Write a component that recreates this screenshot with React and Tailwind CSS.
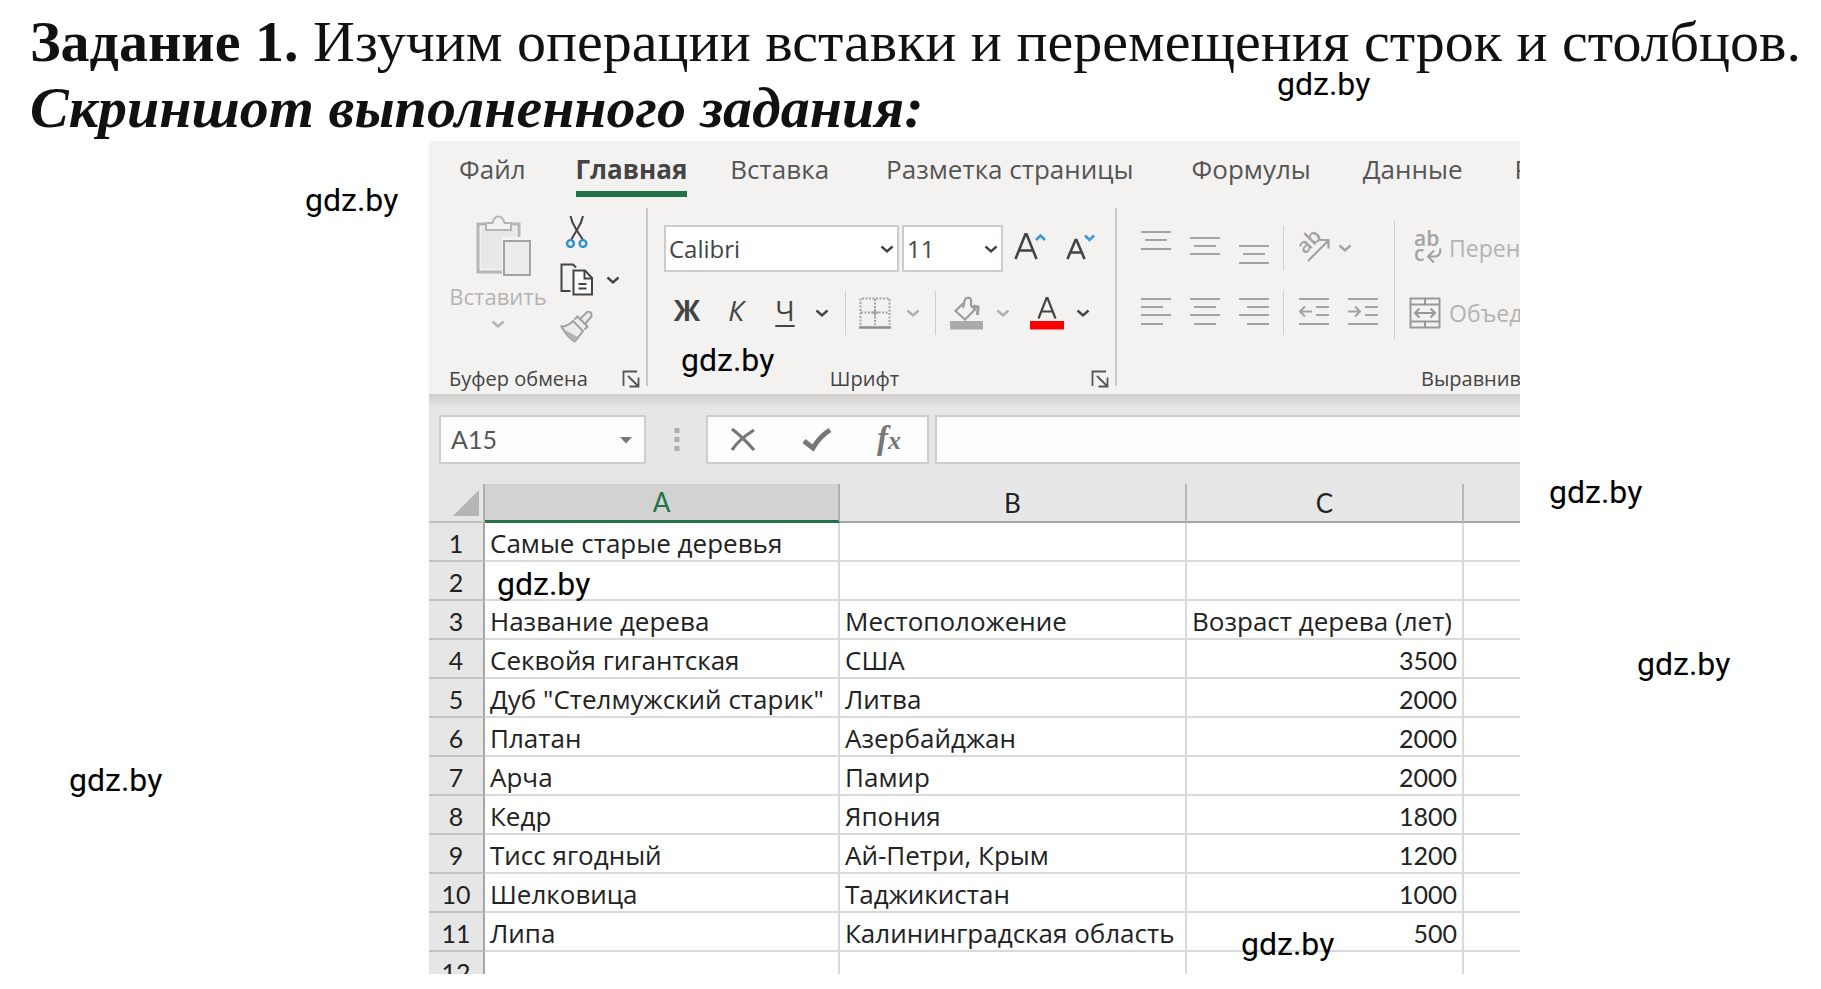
import React from "react";

const tabs = [
  { name: "Файл", box: "ml-[30px]" },
  { name: "Главная", box: "ml-[50px]", active: true },
  { name: "Вставка", box: "ml-[43px]" },
  { name: "Разметка страницы", box: "ml-[57px]" },
  { name: "Формулы", box: "ml-[58px]" },
  { name: "Данные", box: "ml-[52px]" },
  { name: "Рецензирование", box: "ml-[52px]" },
];

const rows = [
  ["Самые старые деревья", "", ""],
  ["", "", ""],
  ["Название дерева", "Местоположение", "Возраст дерева (лет)"],
  ["Секвойя гигантская", "США", 3500],
  ['Дуб "Стелмужский старик"', "Литва", 2000],
  ["Платан", "Азербайджан", 2000],
  ["Арча", "Памир", 2000],
  ["Кедр", "Япония", 1800],
  ["Тисс ягодный", "Ай-Петри, Крым", 1200],
  ["Шелковица", "Таджикистан", 1000],
  ["Липа", "Калининградская область", 500],
];

const marks = [
  "left-[1277px] top-[64px]",
  "left-[305px] top-[180px]",
  "left-[681px] top-[340px]",
  "left-[1549px] top-[472px]",
  "left-[497px] top-[564px]",
  "left-[1637px] top-[644px]",
  "left-[69px] top-[760px]",
  "left-[1241px] top-[924px]",
];

const Chevron = ({ color = "#444444" }) => (
  <svg width="16" height="16" viewBox="0 0 16 16" fill="none" stroke={color} strokeWidth="2.4">
    <path d="M2.5 5.5 8 10.500l5.500-5" />
  </svg>
);

const Launcher = () => (
  <button aria-label="Параметры группы">
    <svg width="18" height="18" viewBox="0 0 18 18" fill="none" stroke="#555555" strokeWidth="1.8">
      <path d="M1.500 16V1.500H15M6 6l9.500 9.500M16.500 7.500v9h-9" />
    </svg>
  </button>
);

// Horizontal strokes given as [x1, x2, y]
const Lines = ({ label, lines, children }) => (
  <button aria-label={label}>
    <svg width="30" height="44" viewBox="0 0 30 44" fill="none" stroke="#a3a3a3" strokeWidth="2">
      {lines.map(([a, b, y]) => (
        <path key={y} d={`M${a} ${y}H${b}`} />
      ))}
      {children}
    </svg>
  </button>
);

const Divider = () => <div className="h-11 w-px shrink-0 bg-[#cfcfcf]" />;

const Ribbon = () => (
  <div className="flex h-[186px] text-[#444444]">
    <section className="flex w-[217px] shrink-0 flex-col justify-between pb-[3px]">
      <div className="flex pl-4 pt-[7px]">
        <button className="flex w-[106px] flex-col items-center text-[22px] leading-7 text-[#b3b3b3]">
          <svg className="ml-3" width="56" height="62" viewBox="0 0 56 62" fill="none" stroke="#b5b5b5" strokeWidth="2">
            <path d="M12 9H2v48h24M33 9h10v13" strokeWidth="3" />
            <path d="M5 12h35v10H26v32H5z" fill="#e8e8e8" stroke="none" />
            <path d="M10 15V8h6.500c1-4 3-6.500 6-6.500s5 2.500 6 6.500H35v7z" fill="#f3f2f1" />
            <path d="M28 26h26v34H28z" fill="#ececec" stroke="#a3a3a3" />
          </svg>
          <span className="mt-[5px]">Вставить</span>
          <span className="mt-[6px]"><Chevron color="#b3b3b3" /></span>
        </button>
        <div className="ml-[9px] flex flex-col gap-[15px]">
          <button aria-label="Вырезать" className="w-8">
            <svg width="32" height="33" viewBox="0 0 32 33" fill="none" stroke="#444444" strokeWidth="2">
              <path d="M10.500 1c1 5 3 9 5.500 13l7 11M23 1c-1 5-3 9-5.500 13L11 25" />
              <circle cx="10.500" cy="28.500" r="3.400" stroke="#2e8fd0" strokeWidth="2.400" />
              <circle cx="23" cy="28.500" r="3.400" stroke="#2e8fd0" strokeWidth="2.400" />
            </svg>
          </button>
          <div className="flex items-center gap-[11px]">
            <button aria-label="Копировать">
              <svg width="34" height="33" viewBox="0 0 34 33" fill="none" stroke="#444444" strokeWidth="2">
                <path d="M10.500 28H1.500V1.500H13l3 3" />
                <path d="M13.500 7.500h11.500l7 7.500v16.500H13.500z" fill="#fafafa" />
                <path d="M24.500 7.500v8h7.500M18.500 21h8M18.500 25.500h8" />
              </svg>
            </button>
            <button aria-label="Варианты копирования"><Chevron /></button>
          </div>
          <button aria-label="Формат по образцу" className="w-8">
            <svg width="33" height="32" viewBox="0 0 33 32" fill="none" stroke="#a0a0a0" strokeWidth="2">
              <path d="M1.500 15.500c4 0 8-2 11.500-5.500l10 10c-3 4-5 7-8.500 10.500C9 27 5 22 1.500 15.500z" fill="#ececec" />
              <path d="m5 19 13 7-4 4c-4-3-7-7-9-11z" fill="#b5b5b5" stroke="none" />
              <path d="m14.500 8.500 3-3 10 10-3 3M20 8l7-7c3-1 5 1 4.500 4.500L25 13" fill="#ececec" />
            </svg>
          </button>
        </div>
      </div>
      <div className="flex items-center justify-between pl-5 pr-[6px]">
        <span className="text-[20px] leading-6">Буфер обмена</span>
        <Launcher />
      </div>
    </section>
    <div className="h-[178px] w-[2px] shrink-0 bg-[#c8c8c8]" />

    <section className="flex w-[467px] shrink-0 flex-col justify-between pb-[3px] pl-4 pt-[17px]">
      <div>
        <div className="flex items-center">
          <div className="relative">
            <select aria-label="Шрифт" className="h-[47px] w-[235px] appearance-none border-2 border-[#cccccc] bg-white pl-[3px] text-[24px]">
              <option>Calibri</option>
            </select>
            <span className="pointer-events-none absolute right-1 top-4"><Chevron /></span>
          </div>
          <div className="relative ml-[3px]">
            <select aria-label="Размер шрифта" className="h-[47px] w-[101px] appearance-none border-2 border-[#cccccc] bg-white pl-[3px] text-[24px]">
              <option>11</option>
            </select>
            <span className="pointer-events-none absolute right-1 top-4"><Chevron /></span>
          </div>
          <button aria-label="Увеличить размер шрифта" className="ml-[11px]">
            <svg width="32" height="32" viewBox="0 0 32 32" fill="none" stroke="#444444" strokeWidth="2.600">
              <path d="M1.500 26 11.500 1h1l10 25M5 17.500h14" />
              <path d="m22 7 4.500-4.500L31 7" stroke="#3a9bd0" />
            </svg>
          </button>
          <button aria-label="Уменьшить размер шрифта" className="ml-5">
            <svg width="30" height="32" viewBox="0 0 30 32" fill="none" stroke="#444444" strokeWidth="2.600">
              <path d="M1.500 26 9.500 7h1l8 19M4.500 19.500h11" />
              <path d="m19 2.500 4.500 4.500L28 2.500" stroke="#3a9bd0" />
            </svg>
          </button>
        </div>
        <div className="mt-[19px] flex h-11 items-center pl-[6px] text-[28px] leading-9">
          <button className="w-[34px] pb-[6px] font-bold">Ж</button>
          <button className="ml-[15px] w-[34px] pb-[6px] italic">К</button>
          <button className="ml-[15px] w-[34px] pb-[6px] underline decoration-2 underline-offset-4">Ч</button>
          <button aria-label="Варианты подчёркивания" className="ml-3 mr-[15px]"><Chevron /></button>
          <Divider />
          <button aria-label="Границы" className="ml-[13px]">
            <svg width="32" height="32" viewBox="0 0 32 32" fill="none" stroke="#a3a3a3" strokeWidth="2">
              <path d="M1.500 28V1.500h29V28M16 2v26M2 15.500h28" strokeDasharray="2 1.500" />
              <path d="M12.500 15.500h7M16 12v7" />
              <path d="M0 30.500h32" stroke="#8f8f8f" strokeWidth="2.600" />
            </svg>
          </button>
          <button aria-label="Варианты границ" className="mx-[14px]"><Chevron color="#b0b0b0" /></button>
          <Divider />
          <button aria-label="Цвет заливки" className="ml-[14px]">
            <svg width="34" height="34" viewBox="0 0 34 34" fill="none" stroke="#9c9c9c" strokeWidth="2.200">
              <path d="m13.500 7-8 8 9.500 8.500L25 13.500l-4-4V3.500c-1-2.500-5-2.500-6 0L13 12" />
              <path d="m23 10 5 1-.5 8" strokeWidth="3" />
              <path d="M0 25h33v8.500H0z" fill="#aaaaaa" stroke="none" />
            </svg>
          </button>
          <button aria-label="Варианты заливки" className="ml-[11px]"><Chevron color="#b0b0b0" /></button>
          <button aria-label="Цвет текста" className="ml-[19px]">
            <svg width="34" height="34" viewBox="0 0 34 34" fill="none" stroke="#444444" strokeWidth="2.200">
              <path d="M8.500 22.500 16.500 2h1l8 20.500M11.500 15.500h11" />
              <path d="M0 25h34v8.500H0z" fill="#ff0000" stroke="none" />
            </svg>
          </button>
          <button aria-label="Варианты цвета текста" className="ml-[11px]"><Chevron /></button>
        </div>
      </div>
      <div className="flex items-center pr-[6px]">
        <span className="flex-1 pr-[26px] text-center text-[20px] leading-6">Шрифт</span>
        <Launcher />
      </div>
    </section>
    <div className="h-[178px] w-[2px] shrink-0 bg-[#c8c8c8]" />

    <section className="flex shrink-0 flex-col justify-between pb-[3px] pl-6 pt-3">
      <div className="flex h-[120px]">
        <div className="mr-4 flex w-[237px] flex-col gap-[21px] pt-[6px]">
          <div className="flex items-center">
            <div className="mr-[14px] flex gap-[19px]">
              <Lines label="По верхнему краю" lines={[[0, 30, 6], [4, 26, 14], [0, 30, 23]]} />
              <Lines label="По середине" lines={[[0, 30, 12], [4, 26, 20], [0, 30, 28]]} />
              <Lines label="По нижнему краю" lines={[[0, 30, 20], [4, 26, 28], [0, 30, 37]]} />
            </div>
            <Divider />
            <button aria-label="Ориентация" className="ml-3">
              <svg className="overflow-visible" width="36" height="44" viewBox="0 0 36 44" fill="none" stroke="#a3a3a3" strokeWidth="2.200">
                <text x="9" y="29" transform="rotate(-45 9 29)" fontSize="21" fontWeight="600" fill="#a3a3a3" stroke="none">ab</text>
                <path d="m12 35 20-20M24 14h8.500v8.500" />
              </svg>
            </button>
            <button aria-label="Варианты ориентации" className="ml-[5px]"><Chevron color="#a3a3a3" /></button>
          </div>
          <div className="flex items-center">
            <div className="mr-[14px] flex gap-[19px]">
              <Lines label="По левому краю" lines={[[0, 30, 8], [0, 22, 16], [0, 30, 24], [0, 22, 33]]} />
              <Lines label="По центру" lines={[[0, 30, 8], [4, 26, 16], [0, 30, 24], [4, 26, 33]]} />
              <Lines label="По правому краю" lines={[[0, 30, 8], [8, 30, 16], [0, 30, 24], [8, 30, 33]]} />
            </div>
            <Divider />
            <div className="ml-[15px] flex gap-[19px]">
              <Lines label="Уменьшить отступ" lines={[[0, 30, 8], [17, 30, 16], [17, 30, 24], [0, 30, 33]]}>
                <path d="M1 20.500h12M6 15.500l-5 5 5 5" />
              </Lines>
              <Lines label="Увеличить отступ" lines={[[0, 30, 8], [17, 30, 16], [17, 30, 24], [0, 30, 33]]}>
                <path d="M0 20.500h12M7 15.500l5 5-5 5" />
              </Lines>
            </div>
          </div>
        </div>
        <div className="w-px shrink-0 bg-[#cfcfcf]" />
        <div className="ml-[14px] flex flex-col gap-[21px] pt-[6px] text-[23px] text-[#b3b3b3]">
          <button className="flex h-11 items-center gap-2 whitespace-nowrap">
            <svg className="overflow-visible" width="32" height="36" viewBox="0 0 32 36" fill="none" stroke="#a3a3a3" strokeWidth="2.200">
              <text x="5" y="16" fontSize="21" fontWeight="600" fill="#a3a3a3" stroke="none">ab</text>
              <text x="5" y="31" fontSize="21" fontWeight="600" fill="#a3a3a3" stroke="none">c</text>
              <path d="M25 20.500l-6 6 6 6M19 26.500h6c5 0 7-3 6-8" />
            </svg>
            <span>Перенести текст</span>
          </button>
          <button className="flex h-11 items-center gap-2 whitespace-nowrap">
            <svg width="32" height="32" viewBox="0 0 32 32" fill="none" stroke="#999999" strokeWidth="2">
              <path d="M1.500 1.500h29v29h-29zM1.500 7.500h29M1.500 24.500h29M16 1.500v6M16 24.500v6" />
              <path d="M6 16h20M10.500 11.500 6 16l4.500 4.500M21.500 11.500 26 16l-4.500 4.500" />
            </svg>
            <span>Объединить</span>
          </button>
        </div>
      </div>
      <span className="ml-[280px] text-[20px] leading-6">Выравнивание</span>
    </section>
  </div>
);

const FormulaBar = () => (
  <div className="flex h-[90px] items-start bg-linear-to-b from-[#cfcdcc] to-[#e6e6e6] to-15% pl-[10px] pt-[21px]">
    <div className="flex h-[49px] w-[207px] shrink-0 items-center border-2 border-[#cdcdcd] bg-[#fdfdfd] pr-3">
      <input aria-label="Имя" defaultValue="A15" className="w-full bg-transparent pl-[10px] font-[Lato,sans-serif] text-[25px] text-[#555555] outline-none" />
      <button aria-label="Список имён">
        <svg width="12" height="8" viewBox="0 0 12 8"><path d="M0 1h12L6 7.500z" fill="#777777" /></svg>
      </button>
    </div>
    <svg className="ml-7 mt-[13px] shrink-0" width="6" height="24" viewBox="0 0 6 24" fill="#adadad">
      <path d="M0.500 0h5v5h-5zM0.500 9h5v5h-5zM0.500 18h5v5h-5z" />
    </svg>
    <div className="ml-[26px] flex h-[49px] w-[223px] shrink-0 items-center border-2 border-[#cdcdcd] bg-[#fdfdfd] pl-[21px]">
      <button aria-label="Отмена">
        <svg width="28" height="26" viewBox="0 0 28 26" fill="none" stroke="#777777" strokeWidth="3.200">
          <path d="M3 2c8 6 15 13 22 21M25 3C17 8 9 14 3 23" />
        </svg>
      </button>
      <button aria-label="Ввод" className="ml-[45px]">
        <svg width="30" height="26" viewBox="0 0 30 26" fill="none" stroke="#777777" strokeWidth="5">
          <path d="m2 14 9 7C15 14 20 8 28 3" />
        </svg>
      </button>
      <button className="ml-[45px] flex items-baseline font-[Liberation_Serif,serif] font-bold italic leading-8 text-[#777777]">
        <span className="text-[33px]">f</span>
        <span className="text-[26px]">x</span>
      </button>
    </div>
    <input aria-label="Строка формул" className="ml-[6px] h-[49px] min-w-0 flex-1 border-2 border-r-0 border-[#cdcdcd] bg-[#fdfdfd] outline-none" />
  </div>
);

const Sheet = () => (
  <table className="w-full table-fixed border-separate border-spacing-0 text-[26px] leading-8 text-[#222222]">
    <colgroup>
      <col className="w-[56px]" />
      <col className="w-[355px]" />
      <col className="w-[347px]" />
      <col className="w-[277px]" />
      <col />
    </colgroup>
    <thead>
      <tr className="h-[39px] bg-[#e6e6e6] font-[Lato,sans-serif]">
        <th className="border-b-2 border-r-2 border-b-[#c0c0c0] border-r-[#b0b0b0] p-0">
          <svg className="ml-auto mr-1" width="26" height="26" viewBox="0 0 26 26"><path d="M26 0v26H0z" fill="#b4b4b4" /></svg>
        </th>
        <th className="border-b-3 border-r-2 border-b-[#217346] border-r-[#b0b0b0] bg-[#d2d2d2] p-0 font-normal text-[#217346]">A</th>
        <th className="border-b-2 border-r-2 border-b-[#a6a6a6] border-r-[#b8b8b8] p-0 font-normal">B</th>
        <th className="border-b-2 border-r-2 border-b-[#a6a6a6] border-r-[#b8b8b8] p-0 font-normal">C</th>
        <th className="border-b-2 border-[#a6a6a6] p-0" />
      </tr>
    </thead>
    <tbody>
      {rows.map((row, i) => (
        <tr key={i} className="h-[39px]">
          <th className="border-b-2 border-r-2 border-b-[#c2c2c2] border-r-[#a6a6a6] bg-[#e6e6e6] p-0 pt-[2px] font-[Lato,sans-serif] text-[25px] font-normal">{i + 1}</th>
          {row.map((cell, j) => (
            <td
              key={j}
              className={`whitespace-nowrap border-b-2 border-r-2 border-[#dadada] px-[5px] pb-0 pt-[2px] ${
                typeof cell === "number" ? "text-right font-[Lato,sans-serif] text-[25px]" : ""
              }`}
            >
              {cell}
            </td>
          ))}
          <td className="border-b-2 border-[#dadada] p-0" />
        </tr>
      ))}
      <tr>
        <th className="border-r-2 border-[#a6a6a6] bg-[#e6e6e6] p-0 font-[Lato,sans-serif] text-[25px] font-normal">
          <div className="h-[22px] overflow-hidden pt-1">12</div>
        </th>
        <td className="border-r-2 border-[#dadada] p-0" />
        <td className="border-r-2 border-[#dadada] p-0" />
        <td className="border-r-2 border-[#dadada] p-0" />
        <td className="p-0" />
      </tr>
    </tbody>
  </table>
);

export default function App() {
  return (
    <main className="relative min-h-screen overflow-hidden bg-white font-[Open_Sans,sans-serif]">
      <header className="whitespace-nowrap pl-[30px] pt-[9px] font-[Liberation_Serif,serif] text-[58px] leading-[66px] text-[#111111]">
        <h1><b>Задание 1.</b> Изучим операции вставки и перемещения строк и столбцов.</h1>
        <h2 className="font-bold italic">Скриншот выполненного задания:</h2>
      </header>

      <div className="ml-[429px] mr-[301px] overflow-hidden">
        <div className="bg-[#f3f2f1]">
          <nav className="flex h-[67px] items-start overflow-hidden pt-3 text-[26px] leading-8 text-[#555555]">
            {tabs.map((tab) => (
              <button
                key={tab.name}
                className={`shrink-0 whitespace-nowrap ${tab.box} ${
                  tab.active ? "border-b-6 border-[#217346] pb-[6px] font-bold text-[#444444]" : ""
                }`}
              >
                {tab.name}
              </button>
            ))}
          </nav>
          <Ribbon />
        </div>
        <FormulaBar />
        <Sheet />
      </div>

      {marks.map((pos) => (
        <span key={pos} className={`absolute font-[Roboto,sans-serif] text-[32px] leading-10 text-black ${pos}`}>
          gdz.by
        </span>
      ))}
    </main>
  );
}
